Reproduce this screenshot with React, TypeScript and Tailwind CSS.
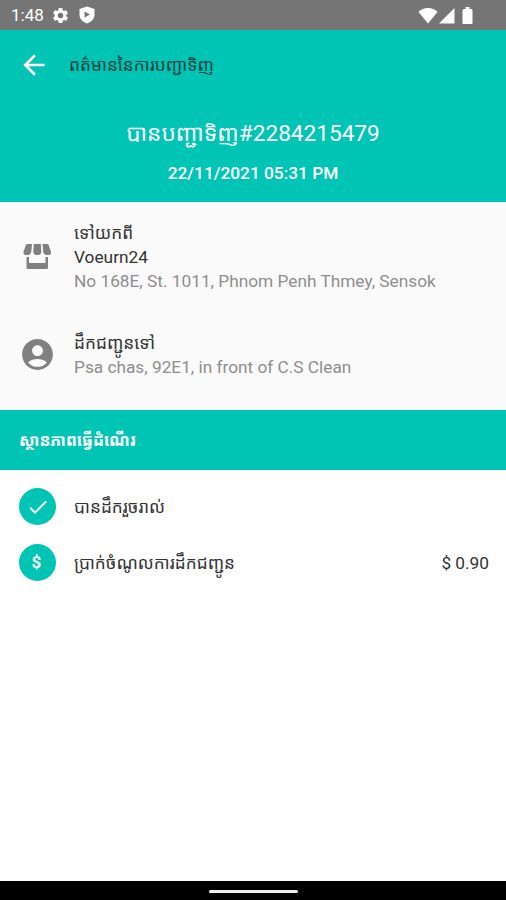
import React from 'react';
import { MdAccountCircle, MdArrowBack, MdCheck, MdSettings } from 'react-icons/md';

const order = {
  id: '2284215479',
  date: '22/11/2021 05:31 PM',
  shop: 'Voeurn24',
  pickup: 'No 168E, St. 1011, Phnom Penh Thmey, Sensok',
  dropoff: 'Psa chas, 92E1, in front of C.S Clean',
  fee: '$ 0.90',
};

function ShieldPlayIcon() {
  return (
    <svg width="16" height="18" viewBox="0 0 16 18" fill="none">
      <path d="M8 .5 15.500 3v6c0 4-3.500 7-7.500 8.500C4 16 .5 13 .5 9V3z" fill="#fff" />
      <path d="M5.500 5.500v6l5.500-3z" fill="#757575" />
    </svg>
  );
}

function WifiIcon() {
  return (
    <svg width="20" height="17" viewBox="0 0 20 17">
      <path d="M10 16.500.500 5C3 2.300 6.300 1 10 1S17 2.300 19.500 5z" fill="#fff" />
    </svg>
  );
}

function SignalIcon() {
  return (
    <svg width="16" height="17" viewBox="0 0 16 17">
      <path d="M15.500 1v15.500H0z" fill="#fff" />
    </svg>
  );
}

function BatteryIcon() {
  return (
    <svg width="11" height="17" viewBox="0 0 11 17">
      <path d="M3.500 0h4v2H9a1.500 1.500 0 0 1 1.500 1.500V16a1 1 0 0 1-1 1h-8a1 1 0 0 1-1-1V3.500A1.500 1.500 0 0 1 2 2h1.500z" fill="#fff" />
    </svg>
  );
}

function ShopIcon() {
  return (
    <svg width="29" height="26" viewBox="0 0 29 26" fill="#808080">
      <path d="M4.500 0H9L8.300 7.500C8 9.800 6.800 11 4.700 11H3C1 11 0 9.300.6 7.500L2.800 1.300C3.100.5 3.700 0 4.500 0z" />
      <path d="M10.800 0h7l.500 7.500c.1 2.200-1.200 3.500-3 3.500h-2c-1.800 0-3.100-1.300-3-3.500z" />
      <path d="M19.500 0H24c.8 0 1.400.5 1.700 1.300l2.200 6.200c.6 1.800-.4 3.500-2.400 3.500h-1.700c-2.100 0-3.300-1.200-3.600-3.500z" />
      <path d="M3.500 13H6v6h16.500v-6H25v10.500a1.500 1.500 0 0 1-1.500 1.500H5a1.500 1.500 0 0 1-1.500-1.500z" />
    </svg>
  );
}

function StatusBar() {
  return (
    <div className="flex h-[30px] items-center bg-[#757575] pl-[11px] pr-[33px] text-white">
      <span className="w-[33px] whitespace-nowrap pt-[2px] text-[17px]">1:48</span>
      <MdSettings size={19} className="ml-[7px]" />
      <span className="ml-[9px]">
        <ShieldPlayIcon />
      </span>
      <div className="ml-auto flex items-center pt-px">
        <WifiIcon />
        <span className="ml-px">
          <SignalIcon />
        </span>
        <span className="ml-[7px]">
          <BatteryIcon />
        </span>
      </div>
    </div>
  );
}

export default function App() {
  return (
    <div className="flex h-[900px] w-[506px] flex-col overflow-hidden bg-white font-[Roboto,'Noto_Sans_Khmer','Khmer_OS',sans-serif] text-[#333]">
      <StatusBar />

      <header className="h-[172px] bg-[#00c4b4]">
        <div className="flex h-[70px] items-center pl-[18px]">
          <MdArrowBack size={32} className="text-white" />
          <h1 className="ml-[19px] whitespace-nowrap pt-[2px] text-[17.300px] text-[#17443f]">ពត៌មាននៃការបញ្ជាទិញ</h1>
        </div>
        <div className="flex flex-col items-center text-white">
          <p className="mt-[18px] whitespace-nowrap text-[22.600px] leading-[32px]">បានបញ្ជាទិញ#{order.id}</p>
          <p className="mt-[11px] whitespace-nowrap text-[17.300px] font-medium leading-[24px]">{order.date}</p>
        </div>
      </header>

      <section className="h-[208px] bg-[#fafafa] pt-[19px]">
        <div className="flex h-[72px] pl-[23px]">
          <div className="w-[51px] pt-[23px]">
            <ShopIcon />
          </div>
          <div className="whitespace-nowrap text-[17.280px] leading-[24px]">
            <p>ទៅយកពី</p>
            <p>{order.shop}</p>
            <p className="text-[#8e8e8e]">{order.pickup}</p>
          </div>
        </div>
        <div className="mt-[38px] flex h-[48px] pl-[19px]">
          <MdAccountCircle size={37} className="mt-[5px] text-[#808080]" />
          <div className="ml-[18px] whitespace-nowrap text-[17.250px] leading-[24px]">
            <p>ដឹកជញ្ជូនទៅ</p>
            <p className="text-[#8e8e8e]">{order.dropoff}</p>
          </div>
        </div>
      </section>

      <div className="flex h-[60px] items-center bg-[#00c4b4] pl-[19px]">
        <h2 className="whitespace-nowrap pt-[2px] text-[16.200px] font-bold text-white">ស្ថានភាពធ្វើដំណើរ</h2>
      </div>

      <section className="flex flex-1 flex-col gap-[19px] pl-[19px] pr-[17px] pt-[18px] text-[17.250px]">
        <div className="flex h-[37px] items-center">
          <span className="flex size-[37px] items-center justify-center rounded-full bg-[#00c4b4] text-white">
            <MdCheck size={24} />
          </span>
          <span className="ml-[18px] whitespace-nowrap pt-[2px]">បានដឹករួចរាល់</span>
        </div>
        <div className="flex h-[37px] items-center">
          <span className="flex size-[37px] items-center justify-center rounded-full bg-[#00c4b4] pr-[2px] text-[17px] font-bold text-white">
            $
          </span>
          <span className="ml-[18px] whitespace-nowrap pt-[2px]">ប្រាក់ចំណូលការដឹកជញ្ជូន</span>
          <span className="ml-auto pt-[2px]">{order.fee}</span>
        </div>
      </section>

      <div className="flex h-[19px] items-center justify-center bg-black">
        <div className="mt-[2px] h-[3px] w-[89px] rounded-full bg-[#eee]" />
      </div>
    </div>
  );
}
